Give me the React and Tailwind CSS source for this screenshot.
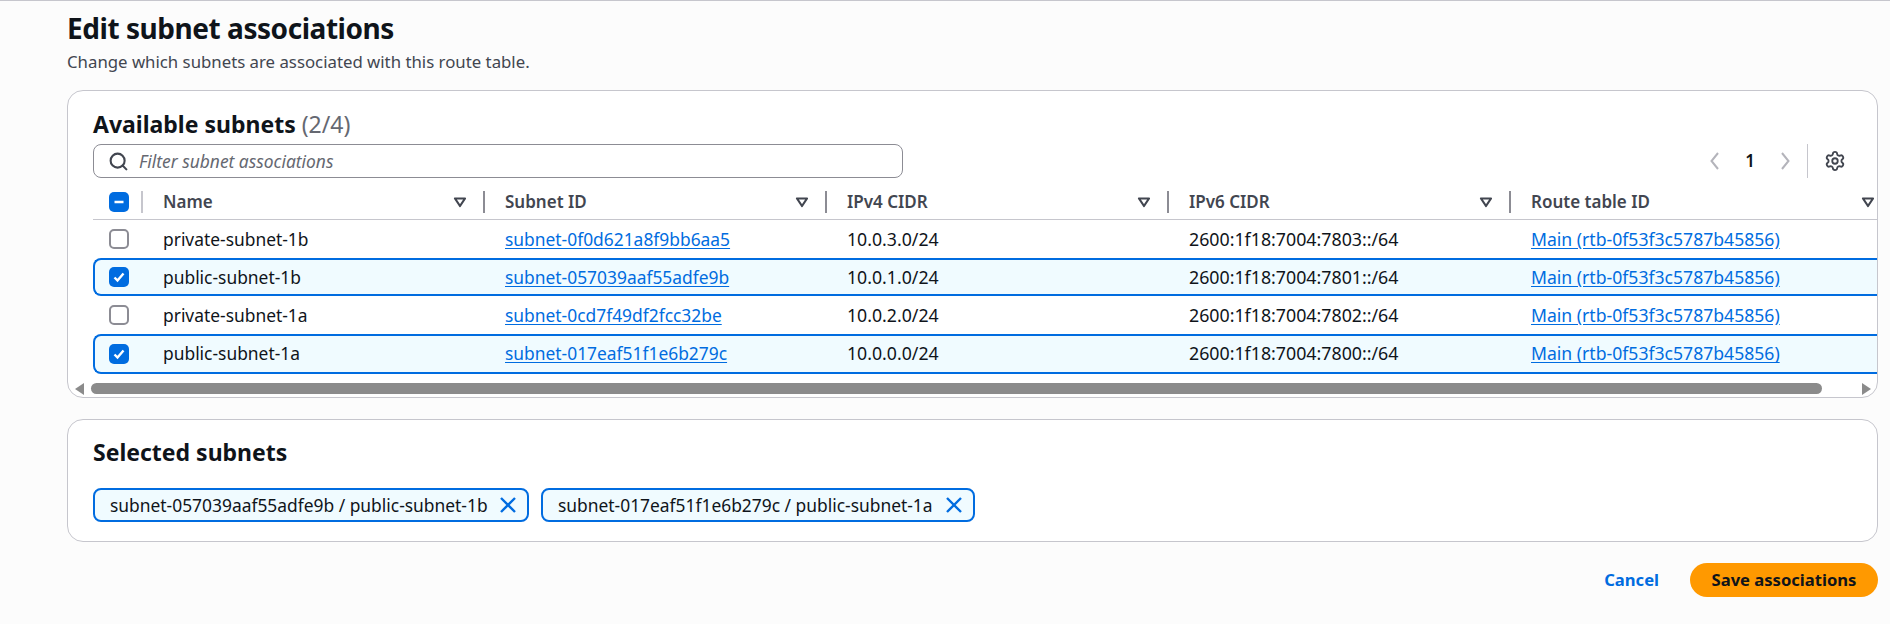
import React from 'react';
import { Search, Settings } from 'lucide-react';

const rows = [
  { name: 'private-subnet-1b', id: 'subnet-0f0d621a8f9bb6aa5', v4: '10.0.3.0/24', v6: '2600:1f18:7004:7803::/64', selected: false },
  { name: 'public-subnet-1b', id: 'subnet-057039aaf55adfe9b', v4: '10.0.1.0/24', v6: '2600:1f18:7004:7801::/64', selected: true },
  { name: 'private-subnet-1a', id: 'subnet-0cd7f49df2fcc32be', v4: '10.0.2.0/24', v6: '2600:1f18:7004:7802::/64', selected: false },
  { name: 'public-subnet-1a', id: 'subnet-017eaf51f1e6b279c', v4: '10.0.0.0/24', v6: '2600:1f18:7004:7800::/64', selected: true },
];

const columns = ['Name', 'Subnet ID', 'IPv4 CIDR', 'IPv6 CIDR', 'Route table ID'];

const gridCols = 'grid grid-cols-[50px_342px_342px_342px_342px_370px]';
const gridColsSelected = 'grid grid-cols-[48px_342px_342px_342px_342px_370px]';

const Caret = () => (
  <svg width="16" height="16" viewBox="0 0 16 16" className="shrink-0">
    <path d="M3 4.5h10l-5 7.5z" fill="none" stroke="#424650" strokeWidth="2.2" strokeLinejoin="round" />
  </svg>
);

const Check = ({ state }) => {
  if (state === 'off') {
    return <div className="w-5 h-5 shrink-0 rounded-[5px] border-2 border-[#8c8c94] bg-white" />;
  }
  return (
    <div className="w-5 h-5 shrink-0 rounded-[5px] bg-[#006ce0] flex items-center justify-center">
      <svg width="14" height="14" viewBox="0 0 14 14">
        {state === 'mixed' ? (
          <path d="M2.5 7h9" fill="none" stroke="white" strokeWidth="2.4" />
        ) : (
          <path d="M2.5 7.5l3 3 6-7" fill="none" stroke="white" strokeWidth="2.4" />
        )}
      </svg>
    </div>
  );
};

const Token = ({ label, width }) => (
  <div className={`h-[34px] ${width} flex items-center justify-between pl-[15px] pr-[10px] border-2 border-[#006ce0] bg-[#f0fbff] rounded-[8px] text-[17.4px] text-[#0f141a]`}>
    <span className="whitespace-nowrap">{label}</span>
    <svg width="18" height="18" viewBox="0 0 18 18" className="shrink-0">
      <path d="M2 2l14 14M16 2L2 16" fill="none" stroke="#006ce0" strokeWidth="2.4" />
    </svg>
  </div>
);

export default function App() {
  return (
    <div className="w-[1890px] h-[624px] overflow-hidden bg-[#fcfcfc] border-t border-[#c6c6cd] pl-[67px] pr-[12px] text-[#0f141a] font-['Noto_Sans',sans-serif]">
      <h1 className="mt-[9px] h-[36px] leading-[36px] text-[28px] font-bold tracking-[-0.45px]">Edit subnet associations</h1>
      <p className="mt-[5px] h-[22px] leading-[22px] text-[16.8px] text-[#424650]">Change which subnets are associated with this route table.</p>

      {/* Available subnets */}
      <section className="mt-[17px] h-[308px] border border-[#c6c6cd] rounded-[16px] bg-white overflow-hidden flex flex-col">
        <div className="pl-[25px] pt-[17px] flex-1 min-h-0">
          <h2 className="h-[32px] leading-[32px] text-[23px] font-bold">
            Available subnets <span className="font-normal text-[#656871]">(2/4)</span>
          </h2>
          <div className="flex items-center h-[34px] mt-[4px]">
            <div className="w-[810px] h-[34px] border border-[#8c8c94] rounded-[8px] flex items-center pl-[14px] gap-[10px] bg-white">
              <Search size={21} strokeWidth={2.4} className="text-[#424650]" />
              <span className="italic text-[17.4px] text-[#656871]">Filter subnet associations</span>
            </div>
            <div className="ml-auto flex items-center mr-[31px]">
              <svg width="12" height="20" viewBox="0 0 12 20"><path d="M9 2L2.5 10 9 18" fill="none" stroke="#b4b4bb" strokeWidth="2" /></svg>
              <span className="w-[58px] text-center text-[17px] font-semibold">1</span>
              <svg width="12" height="20" viewBox="0 0 12 20"><path d="M3 2l6.5 8L3 18" fill="none" stroke="#b4b4bb" strokeWidth="2" /></svg>
              <div className="w-px h-[34px] bg-[#c6c6cd] ml-[16px] mr-[16px]" />
              <Settings size={22} strokeWidth={2} className="text-[#424650]" />
            </div>
          </div>

          <div className="mt-[12px] overflow-hidden">
            <div className={`${gridCols} h-[30px] w-max border-b border-[#c6c6cd] pb-[5px] items-center text-[17px] font-semibold text-[#424650]`}>
              <div className="flex items-center justify-between pl-[16px] h-[24px]">
                <Check state="mixed" />
                <div className="w-[2px] h-[22px] bg-[#c6c6cd]" />
              </div>
              {columns.map((col, i) => (
                <div key={col} className={`flex items-center h-[24px] pl-[20px] ${i === 4 ? 'pr-[5px]' : ''}`}>
                  <span className="flex-1">{col}</span>
                  <Caret />
                  {i < 4 && <div className="ml-[15px] w-[2px] h-[22px] bg-[#8c8c94]" />}
                </div>
              ))}
            </div>
            {rows.map((row, i) => (
              <div
                key={row.id}
                className={`w-max items-center text-[17.4px] ${i === 3 ? 'h-[40px] pb-[1px]' : 'h-[38px]'} ${row.selected ? `${gridColsSelected} border-y-2 border-l-2 border-[#006ce0] bg-[#f0fbff] rounded-l-[8px]` : gridCols}`}
              >
                <div className={row.selected ? 'pl-[14px]' : 'pl-[16px]'}>
                  <Check state={row.selected ? 'on' : 'off'} />
                </div>
                <div className="pl-[20px]">{row.name}</div>
                <div className="pl-[20px]"><a className="text-[#006ce0] underline underline-offset-2">{row.id}</a></div>
                <div className="pl-[20px] text-[17.7px]">{row.v4}</div>
                <div className="pl-[20px] text-[17.8px]">{row.v6}</div>
                <div className="pl-[20px] text-[17.6px]"><a className="text-[#006ce0] underline underline-offset-2">Main (rtb-0f53f3c5787b45856)</a></div>
              </div>
            ))}
          </div>
        </div>

        {/* horizontal scroll bar */}
        <div className="h-[11px] mb-[3px] pl-[7px] pr-[6px] flex items-center">
          <svg width="9" height="12" viewBox="0 0 9 12"><path d="M9 0v12L0 6z" fill="#8b8b8b" /></svg>
          <div className="ml-[7px] w-[1731px] h-[11px] rounded-full bg-[#8b8b8b]" />
          <svg width="9" height="12" viewBox="0 0 9 12" className="ml-auto"><path d="M0 0v12l9-6z" fill="#8b8b8b" /></svg>
        </div>
      </section>

      {/* Selected subnets */}
      <section className="mt-[21px] h-[123px] border border-[#c6c6cd] rounded-[16px] bg-white pl-[25px] pt-[18px]">
        <h2 className="h-[28px] leading-[28px] text-[23px] font-bold">Selected subnets</h2>
        <div className="mt-[22px] flex gap-[12px]">
          <Token label="subnet-057039aaf55adfe9b / public-subnet-1b" width="w-[436px]" />
          <Token label="subnet-017eaf51f1e6b279c / public-subnet-1a" width="w-[434px]" />
        </div>
      </section>

      <div className="mt-[21px] flex items-center justify-end gap-[31px]">
        <span className="text-[16.6px] font-bold text-[#006ce0]">Cancel</span>
        <button className="w-[188px] h-[34px] rounded-full bg-[#ff9900] text-[16.6px] font-bold text-[#0f141a]">Save associations</button>
      </div>
    </div>
  );
}
